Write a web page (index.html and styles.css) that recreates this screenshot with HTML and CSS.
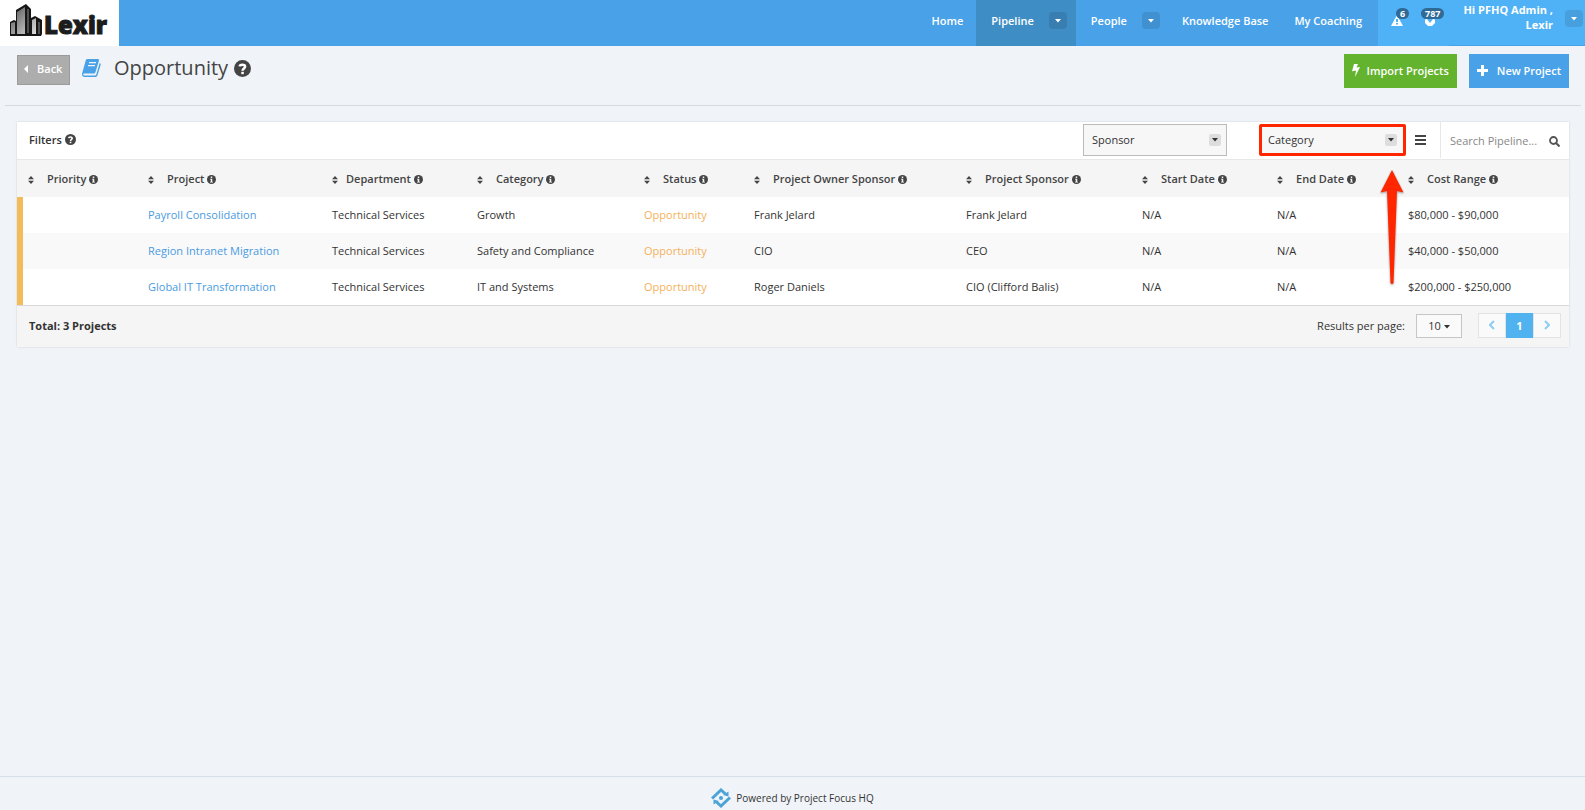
FILE: index.html
```html
<!DOCTYPE html>
<html lang="en">
<head>
    <meta charset="UTF-8">
    <title>Opportunity</title>
    <link rel="stylesheet" href="styles.css">
</head>
<body>
    <!-- shared icons -->
    <svg class="sprite" aria-hidden="true">
        <symbol id="info" viewBox="0 0 12 12"><circle cx="6" cy="6" r="6"/><path fill="#f5f5f5" d="M5 2h2v2H5zM4 5h3v4h1v1H4V9h1V6H4z"/></symbol>
        <symbol id="help" viewBox="0 0 18 18"><circle cx="9" cy="9" r="9"/><path fill="none" stroke="#fff" stroke-width="2.6" d="M6 6.8C6.200 4.400 11.800 4.200 11.800 7c0 2-2.700 1.900-2.700 4.300"/><path fill="#fff" d="M7.700 12.500h2.700V15H7.700z"/></symbol>
        <symbol id="sort" viewBox="0 0 6 8"><path d="M3 0l3 3.300H0zM3 8L0 4.700h6z"/></symbol>
        <symbol id="caret" viewBox="0 0 6 4"><path d="M0 0h6L3 3.500z"/></symbol>
    </svg>

    <header class="top">
        <a href="#" class="logo">
            <svg width="34" height="34" viewBox="0 0 34 34">
                <defs><linearGradient id="lg" x1="0" x2="1" y1="0" y2="1"><stop offset="0" stop-color="#555"/><stop offset="1" stop-color="#ddd"/></linearGradient></defs>
                <path fill="#161616" d="M0 19l4-2 2 1V7l10-6 5 5v9l4-2 7 4v14l-1 2H0z"/>
                <path fill="url(#lg)" d="M1 20l4-1v12H1zM7 9l8-5v27H7zM22 17l4-2v16h-4z"/>
                <path stroke="#888" d="M29 19v12M18 6v24"/>
            </svg>
            <span>Lexir</span>
        </a>
        <nav class="menu">
            <a href="#">Home</a>
            <div class="menu-drop active">
                <a href="#">Pipeline</a>
                <button class="drop" aria-label="Pipeline menu"><svg width="6" height="4"><use href="#caret"/></svg></button>
            </div>
            <div class="menu-drop">
                <a href="#">People</a>
                <button class="drop" aria-label="People menu"><svg width="6" height="4"><use href="#caret"/></svg></button>
            </div>
            <a href="#">Knowledge Base</a>
            <a href="#">My Coaching</a>
        </nav>
        <div class="user">
            <div class="alerts">
                <a href="#" class="alert">
                    <svg width="12" height="11" viewBox="0 0 12 11"><path fill="#fff" d="M6 0l6 11H0z"/><path fill="#50b2f6" d="M5 4h2v3H5zM5 8h2v1.500H5z"/></svg>
                    <span class="badge">6</span>
                </a>
                <a href="#" class="alert">
                    <svg width="10" height="12" viewBox="0 0 10 12"><path fill="#fff" d="M0 5l3-4h4l3 4v3L7 11H3L0 8z"/><path fill="#50b2f6" d="M2 4l3 4 3-4-1-1H3z"/></svg>
                    <span class="badge">787</span>
                </a>
            </div>
            <div class="account">
                <span class="name">Hi PFHQ Admin ,<br>Lexir</span>
                <button class="drop" aria-label="Account menu"><svg width="6" height="4"><use href="#caret"/></svg></button>
            </div>
        </div>
    </header>

    <div class="title-bar">
        <button class="back"><svg width="4" height="8" viewBox="0 0 4 8"><path d="M4 0v8L0 4z"/></svg>Back</button>
        <svg class="book" width="19" height="19" viewBox="0 0 19 19">
            <path fill="#49a2e8" d="M5.500 1h10.200c1.100 0 1.500.8 1.200 1.700L13.500 14c-.3 1-1 1.500-2 1.500H2.300c-1 0-1.300.6-1 1.200.2.500.6.700 1.300.7h10.200c.8 0 1.300-.3 1.500-1L17.700 5c1 .4 1.200 1 1 1.700l-3.200 10.500c-.3 1.100-1.200 1.800-2.300 1.800H2.500C.8 19-.4 17.200.1 15.500L3.700 2.500C4 1.500 4.600 1 5.500 1z"/>
            <path stroke="#f0f4f8" stroke-width="1.200" d="M7 4.600h7M6 7.600h7"/>
        </svg>
        <h1>Opportunity</h1>
        <svg class="dark" width="17" height="17"><use href="#help"/></svg>
        <div class="actions">
            <button class="btn green"><svg width="8" height="13" viewBox="0 0 8 13"><path d="M2 0h4L4.500 3.500 8 3 3 13l1-6.500-4 .8z"/></svg>Import Projects</button>
            <button class="btn blue"><svg width="11" height="11" viewBox="0 0 11 11"><path d="M4 0h3v4h4v3H7v4H4V7H0V4h4z"/></svg>New Project</button>
        </div>
    </div>

    <main class="panel">
        <div class="filters">
            <span class="filters-label">Filters <svg class="dark" width="11" height="11"><use href="#help"/></svg></span>
            <div class="select">
                <select aria-label="Sponsor"><option>Sponsor</option></select>
                <span class="arrow"><svg width="6" height="4"><use href="#caret"/></svg></span>
            </div>
            <div class="select marked">
                <select aria-label="Category"><option>Category</option></select>
                <span class="arrow"><svg width="6" height="4"><use href="#caret"/></svg></span>
                <svg class="pointer" width="24" height="116" viewBox="0 0 24 116"><path fill="#ff2600" d="M12 0l11.500 22.500L17 21l-3.500 92q-1.500 2-3 0L7 21 .5 22.500z"/></svg>
            </div>
            <button class="list" aria-label="Columns"><svg width="11" height="10" viewBox="0 0 11 10"><path d="M0 0h11v2H0zM0 4h11v2H0zM0 8h11v2H0z"/></svg></button>
            <div class="search">
                <input type="text" placeholder="Search Pipeline..." aria-label="Search Pipeline">
                <svg width="11" height="11" viewBox="0 0 11 11"><circle cx="4.500" cy="4.500" r="3.500" fill="none" stroke="#555" stroke-width="1.800"/><path stroke="#555" stroke-width="2" d="M7 7l3.500 3.500"/></svg>
            </div>
        </div>

        <table>
            <colgroup>
                <col class="c-priority"><col class="c-project"><col class="c-department"><col class="c-category"><col class="c-status">
                <col class="c-owner"><col class="c-sponsor"><col class="c-start"><col class="c-end"><col class="c-cost">
            </colgroup>
            <thead>
                <tr>
                    <th><svg class="sort" width="6" height="8"><use href="#sort"/></svg>Priority <svg width="9" height="9"><use href="#info"/></svg></th>
                    <th><svg class="sort" width="6" height="8"><use href="#sort"/></svg>Project <svg width="9" height="9"><use href="#info"/></svg></th>
                    <th class="tight"><svg class="sort" width="6" height="8"><use href="#sort"/></svg>Department <svg width="9" height="9"><use href="#info"/></svg></th>
                    <th><svg class="sort" width="6" height="8"><use href="#sort"/></svg>Category <svg width="9" height="9"><use href="#info"/></svg></th>
                    <th><svg class="sort" width="6" height="8"><use href="#sort"/></svg>Status <svg width="9" height="9"><use href="#info"/></svg></th>
                    <th><svg class="sort" width="6" height="8"><use href="#sort"/></svg>Project Owner Sponsor <svg width="9" height="9"><use href="#info"/></svg></th>
                    <th><svg class="sort" width="6" height="8"><use href="#sort"/></svg>Project Sponsor <svg width="9" height="9"><use href="#info"/></svg></th>
                    <th><svg class="sort" width="6" height="8"><use href="#sort"/></svg>Start Date <svg width="9" height="9"><use href="#info"/></svg></th>
                    <th><svg class="sort" width="6" height="8"><use href="#sort"/></svg>End Date <svg width="9" height="9"><use href="#info"/></svg></th>
                    <th><svg class="sort" width="6" height="8"><use href="#sort"/></svg>Cost Range <svg width="9" height="9"><use href="#info"/></svg></th>
                </tr>
            </thead>
            <tbody>
                <tr>
                    <td></td>
                    <td><a href="#">Payroll Consolidation</a></td>
                    <td>Technical Services</td>
                    <td>Growth</td>
                    <td class="status">Opportunity</td>
                    <td>Frank Jelard</td>
                    <td>Frank Jelard</td>
                    <td>N/A</td>
                    <td>N/A</td>
                    <td>$80,000 - $90,000</td>
                </tr>
                <tr>
                    <td></td>
                    <td><a href="#">Region Intranet Migration</a></td>
                    <td>Technical Services</td>
                    <td>Safety and Compliance</td>
                    <td class="status">Opportunity</td>
                    <td>CIO</td>
                    <td>CEO</td>
                    <td>N/A</td>
                    <td>N/A</td>
                    <td>$40,000 - $50,000</td>
                </tr>
                <tr>
                    <td></td>
                    <td><a href="#">Global IT Transformation</a></td>
                    <td>Technical Services</td>
                    <td>IT and Systems</td>
                    <td class="status">Opportunity</td>
                    <td>Roger Daniels</td>
                    <td>CIO (Clifford Balis)</td>
                    <td>N/A</td>
                    <td>N/A</td>
                    <td>$200,000 - $250,000</td>
                </tr>
            </tbody>
        </table>

        <div class="summary">
            <b>Total: 3 Projects</b>
            <span class="per-label">Results per page:</span>
            <button class="per">10 <svg width="6" height="4"><use href="#caret"/></svg></button>
            <div class="pages">
                <button aria-label="Previous"><svg width="6" height="10" viewBox="0 0 6 10"><path d="M5 1L1 5l4 4"/></svg></button>
                <button class="current">1</button>
                <button aria-label="Next"><svg width="6" height="10" viewBox="0 0 6 10"><path d="M1 1l4 4-4 4"/></svg></button>
            </div>
        </div>
    </main>

    <footer>
        <svg width="20" height="20" viewBox="0 0 20 20">
            <path fill="none" stroke="#4ba3d6" stroke-width="3" d="M1 10.500L10 2l4.500 4M19 9.500L10 18l-4.500-4"/>
            <path fill="#4ba3d6" d="M12 7l5.500-3.500v5zM8 13l-5.500 3.500v-5z"/>
            <circle cx="10" cy="10" r="2" fill="#4ba3d6"/>
        </svg>
        Powered by Project Focus HQ
    </footer>
</body>
</html>
```

FILE: styles.css
```css
* {
    box-sizing: border-box;
}
body {
    margin: 0;
    min-height: 100vh;
    display: flex;
    flex-direction: column;
    background: #f0f4f8;
    color: #333;
    font: 11px/16px "Open Sans", sans-serif;
}
a {
    color: #4a9be0;
    text-decoration: none;
}
button, input, select {
    font: inherit;
    color: inherit;
    margin: 0;
    padding: 0;
    border: 0;
    background: none;
    border-radius: 0;
}
svg {
    fill: currentColor;
    flex: none;
}
.sprite {
    position: absolute;
    width: 0;
    height: 0;
}
.dark {
    color: #444;
}

/* top bar */
.top {
    display: flex;
    height: 46px;
    background: #49a2e8;
    color: #fff;
    font-weight: 600;
}
.top a {
    color: #fff;
}
.top .logo {
    display: flex;
    width: 119px;
    padding: 3px 0 0 10px;
    background: #fff;
    color: #1c1c1c;
}
.logo span {
    font-size: 24px;
    line-height: 44px;
    font-weight: 800;
    -webkit-text-stroke: 1px #1c1c1c;
}
.menu {
    display: flex;
    margin-left: auto;
    padding-right: 3px;
    line-height: 42px;
}
.menu > a {
    padding: 0 13px;
}
.menu-drop {
    display: flex;
    gap: 15px;
    padding: 0 9px 0 15px;
}
.menu-drop.active {
    background: #3f8dc5;
}
.drop {
    display: flex;
    align-items: center;
    justify-content: center;
    width: 18px;
    height: 17px;
    margin-top: 12px;
    border-radius: 4px;
    background: rgba(0, 0, 0, .1);
}
.user {
    display: flex;
    width: 207px;
    background: #50b2f6;
}
.alerts {
    display: flex;
    gap: 22px;
    padding: 15px 0 0 13px;
    width: 71px;
}
.alert {
    position: relative;
    display: block;
    width: 12px;
    height: 12px;
}
.alert svg {
    display: block;
}
.badge {
    position: absolute;
    left: 5px;
    top: -7px;
    padding: 0 4px;
    border-radius: 6px;
    background: #2f6a96;
    font-size: 9px;
    line-height: 11px;
    font-weight: 700;
}
.alert + .alert .badge {
    left: -4px;
}
.account {
    flex: 1;
    display: flex;
    justify-content: flex-end;
    gap: 12px;
    padding-right: 2px;
    border-bottom: 1px solid #49a2e8;
}
.name {
    padding-top: 2px;
    line-height: 15px;
    font-weight: 700;
    text-align: right;
}
.account .drop {
    margin-top: 10px;
}

/* page title */
.title-bar {
    display: flex;
    align-items: flex-start;
    height: 60px;
    margin: 0 4px 0 5px;
    padding: 8px 12px 0;
    border-bottom: 1px solid #d3d9de;
}
.back {
    display: flex;
    align-items: center;
    gap: 9px;
    width: 53px;
    height: 30px;
    margin-top: 1px;
    padding: 0 0 3px 6px;
    border: 1px solid #9b9b9b;
    background: #adadad;
    color: #fff;
    font-weight: 600;
}
.book {
    margin: 4px 13px 0 12px;
}
h1 {
    margin: 0 6px 0 0;
    font-size: 20px;
    line-height: 28px;
    font-weight: 400;
    color: #444;
}
h1 + .dark {
    margin-top: 6px;
}
.actions {
    display: flex;
    gap: 12px;
    margin-left: auto;
}
.btn {
    display: flex;
    align-items: center;
    gap: 7px;
    height: 34px;
    padding: 0 8px;
    color: #fff;
    font-weight: 600;
}
.btn svg {
    margin-bottom: 2px;
}
.green {
    background: #64b32e;
}
.blue {
    gap: 9px;
    background: #49a2e8;
}

/* pipeline table */
.panel {
    margin: 16px 16px 0 17px;
    background: #fff;
    box-shadow: 0 0 2px rgba(0, 0, 0, .15);
}
.filters {
    display: flex;
    align-items: center;
    height: 38px;
    padding-bottom: 1px;
    border-bottom: 1px solid #e7e7e7;
}
.filters-label {
    margin: 0 auto 0 12px;
    font-weight: 600;
}
.filters-label svg {
    vertical-align: -1px;
}
.select {
    position: relative;
    width: 144px;
    height: 32px;
    margin-right: 32px;
}
.select select {
    appearance: none;
    width: 100%;
    height: 100%;
    padding: 0 24px 0 8px;
    border: 1px solid #bbb;
    background: #f7f7f7;
}
.arrow {
    position: absolute;
    right: 6px;
    top: 10px;
    display: flex;
    align-items: center;
    justify-content: center;
    width: 12px;
    height: 12px;
    border-radius: 2px;
    background: #ddd;
    pointer-events: none;
}
.select.marked {
    width: 147px;
    margin-right: 9px;
}
.marked select {
    padding-left: 6px;
    border: 3px solid #ff2600;
    border-radius: 2px;
}
.marked .arrow {
    right: 9px;
}
.pointer {
    position: absolute;
    left: 121px;
    top: 46px;
    z-index: 1;
    filter: drop-shadow(0 1px 1px rgba(0, 0, 0, .4));
}
.list {
    color: #444;
}
.list svg {
    display: block;
}
.search {
    display: flex;
    align-items: center;
    width: 129px;
    height: 36px;
    margin-left: 14px;
    padding: 2px 9px 0;
    border-left: 1px solid #e7e7e7;
}
.search input {
    flex: 1;
    min-width: 0;
    outline: 0;
}
.search input::placeholder {
    color: #888;
}
table {
    width: 100%;
    table-layout: fixed;
    border-collapse: collapse;
}
.c-priority { width: 123px; }
.c-project { width: 184px; }
.c-department { width: 145px; }
.c-category { width: 167px; }
.c-status { width: 110px; }
.c-owner { width: 212px; }
.c-sponsor { width: 176px; }
.c-start { width: 135px; }
.c-end { width: 131px; }
.c-cost { width: 169px; }
th, td {
    height: 36px;
    padding: 0 0 0 8px;
    text-align: left;
    white-space: nowrap;
}
th {
    height: 37px;
    background: #f5f5f5;
    color: #444;
    font-weight: 600;
}
th:first-child {
    padding-left: 11px;
}
th svg {
    vertical-align: -1px;
}
.sort {
    margin-right: 13px;
}
.tight .sort {
    margin-right: 8px;
}
tbody tr:nth-child(even) {
    background: #f9f9f9;
}
td:first-child {
    box-shadow: inset 6px 0 #f3bb59;
}
.status {
    color: #f3b15c;
}
.summary {
    display: flex;
    align-items: center;
    height: 42px;
    padding: 0 8px 2px 12px;
    border-top: 1px solid #d9d9d9;
    background: #f5f5f5;
}
.per-label {
    margin-left: auto;
}
.per {
    width: 46px;
    height: 24px;
    margin: 0 16px 0 11px;
    border: 1px solid #c6c6c6;
    background: #fafafa;
}
.per svg {
    vertical-align: 1px;
}
.pages {
    display: flex;
}
.pages button {
    width: 28px;
    height: 25px;
    border: 1px solid #e3e3e3;
    background: #fafafa;
}
.pages svg {
    fill: none;
    stroke: #8ccdf3;
    stroke-width: 2;
}
.pages .current {
    width: 27px;
    border: 0;
    background: #50b2ee;
    color: #fff;
    font-weight: 700;
}

footer {
    display: flex;
    justify-content: center;
    align-items: center;
    gap: 5px;
    height: 34px;
    margin-top: auto;
    padding-top: 9px;
    border-top: 1px solid #d5dfe8;
    font-size: 10px;
}
```
